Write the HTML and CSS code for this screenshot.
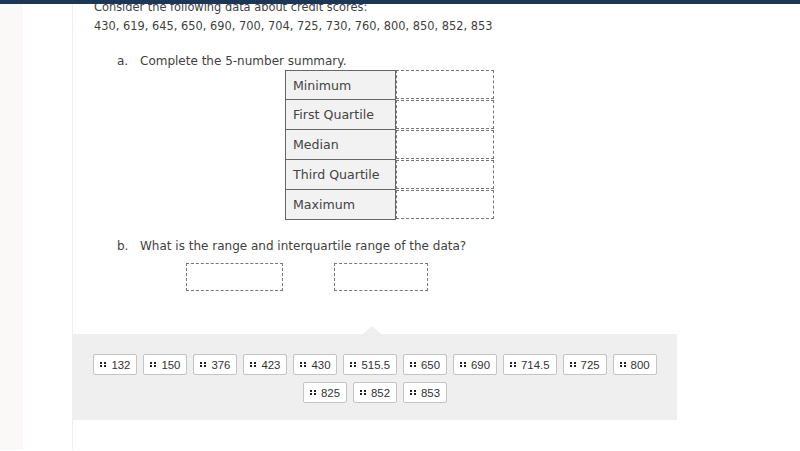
FILE: index.html
```html
<!DOCTYPE html>
<html>
<head>
<title>Credit Scores - 5-number summary</title>
<link rel="stylesheet" href="styles.css">
</head>
<body>

<div class="topbar"></div>

<div class="layout">
    <div class="sideStrip"></div>
    <div class="spacer"></div>

    <div class="panel">
        <div class="question">
            <div class="intro">Consider the following data about credit scores:</div>
            <div class="intro">430, 619, 645, 650, 690, 700, 704, 725, 730, 760, 800, 850, 852, 853</div>

            <div class="part">
                <span class="partLetter">a.</span>
                <span>Complete the 5-number summary.</span>
            </div>

            <div class="summaryTable">
                <div class="rowLabel">Minimum</div>
                <div class="dropBox"></div>
                <div class="rowLabel">First Quartile</div>
                <div class="dropBox"></div>
                <div class="rowLabel">Median</div>
                <div class="dropBox"></div>
                <div class="rowLabel">Third Quartile</div>
                <div class="dropBox"></div>
                <div class="rowLabel">Maximum</div>
                <div class="dropBox"></div>
            </div>

            <div class="part partB">
                <span class="partLetter">b.</span>
                <span>What is the range and interquartile range of the data?</span>
            </div>

            <div class="rangeRow">
                <div class="rangeBox"></div>
                <div class="rangeBox boxTwo"></div>
            </div>
        </div>

        <div class="bank">
            <div class="caret"></div>
            <div class="tiles">
                <div class="tile"><span class="grip"></span>132</div>
                <div class="tile"><span class="grip"></span>150</div>
                <div class="tile"><span class="grip"></span>376</div>
                <div class="tile"><span class="grip"></span>423</div>
                <div class="tile"><span class="grip"></span>430</div>
                <div class="tile"><span class="grip"></span>515.5</div>
                <div class="tile"><span class="grip"></span>650</div>
                <div class="tile"><span class="grip"></span>690</div>
                <div class="tile"><span class="grip"></span>714.5</div>
                <div class="tile"><span class="grip"></span>725</div>
                <div class="tile"><span class="grip"></span>800</div>
                <div class="tile"><span class="grip"></span>825</div>
                <div class="tile"><span class="grip"></span>852</div>
                <div class="tile"><span class="grip"></span>853</div>
            </div>
        </div>
    </div>
</div>

</body>
</html>
```

FILE: styles.css
```css
body{
    margin:0;
    font-family:"DejaVu Sans", sans-serif;
    background:#ffffff;
    color:#3f3f3f;
    overflow:hidden;
}
.topbar{
    height:4px;
    background:#1e3656;
    position:relative;
    z-index:2;
}
.layout{
    display:flex;
    height:446px;
}
.sideStrip{
    width:23px;
    background:#faf9f7;
}
.spacer{
    width:49px;
}
.panel{
    width:604px;
    border-left:1px solid #eeeeee;
    display:flex;
    flex-direction:column;
}
.question{
    padding-left:21px;
    height:336px;
    margin-top:-6px;
    box-sizing:border-box;
}
.intro{
    font-size:11.4px;
    line-height:18px;
}
.intro + .intro{
    margin-top:1px;
}
.part{
    display:flex;
    font-size:12px;
    line-height:16px;
    margin-top:18px;
    padding-left:23px;
}
.partLetter{
    width:23px;
}
.summaryTable{
    display:grid;
    grid-template-columns:111px 98px;
    grid-auto-rows:30px;
    margin-left:191px;
    width:209px;
    margin-top:1px;
}
.rowLabel{
    background:#f2f2f2;
    border:1px solid #666666;
    border-top:none;
    display:flex;
    align-items:center;
    padding-left:7px;
    font-size:12.6px;
    color:#444444;
}
.rowLabel:first-child{
    border-top:1px solid #666666;
}
.dropBox{
    border:1px dashed #777777;
    margin-bottom:1px;
    background:#ffffff;
}
.partB{
    margin-top:18px;
}
.rangeRow{
    display:flex;
    margin-top:9px;
    padding-left:92px;
}
.rangeBox{
    width:95px;
    height:26px;
    border:1px dashed #777777;
}
.boxTwo{
    margin-left:51px;
    width:92px;
}
.bank{
    background:#efefef;
    height:86px;
    position:relative;
    padding-top:20px;
    box-sizing:border-box;
}
.caret{
    position:absolute;
    top:-8px;
    left:290px;
    width:0;
    height:0;
    border-left:9px solid transparent;
    border-right:9px solid transparent;
    border-bottom:8px solid #efefef;
}
.tiles{
    display:flex;
    flex-wrap:wrap;
    justify-content:center;
    gap:7px 6px;
    padding:0;
}
.tile{
    display:flex;
    align-items:center;
    height:21px;
    box-sizing:border-box;
    padding:0 6px 0 6px;
    background:#ffffff;
    border:1px solid #c4c4c4;
    border-radius:2px;
    font-family:"Liberation Sans", Arial, sans-serif;
    font-size:11.4px;
    color:#333333;
}
.grip{
    width:6px;
    height:5px;
    margin-right:5px;
    background:
        linear-gradient(#222, #222) 0 0 / 2px 2px no-repeat,
        linear-gradient(#222, #222) 4px 0 / 2px 2px no-repeat,
        linear-gradient(#222, #222) 0 3px / 2px 2px no-repeat,
        linear-gradient(#222, #222) 4px 3px / 2px 2px no-repeat;
}
```
